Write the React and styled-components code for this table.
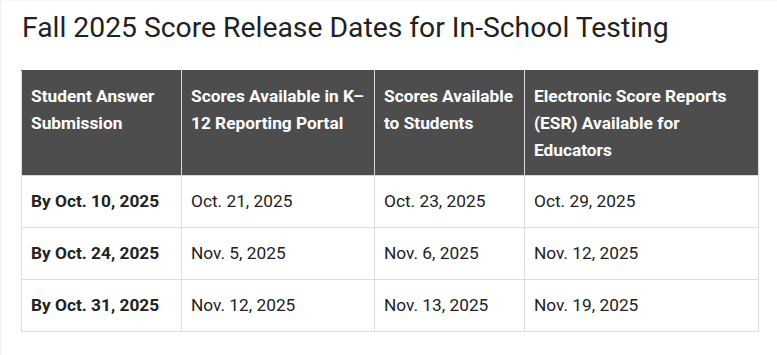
import React from 'react';
import styled, { createGlobalStyle } from 'styled-components';

const GlobalStyle = createGlobalStyle`
    body {
        margin: 0;
        background: #FFFFFF;
        font-family: Roboto, "Liberation Sans", sans-serif;
        color: #222222;
    }
`;

const Page = styled.div`
    min-height: 355px;
    box-sizing: border-box;
    border-left: 1px solid #F0F0F0;
    border-top: 1px solid #F7F7F7;
    padding: 7px 20px 0 20px;
`;

const Title = styled.h2`
    margin: 0 0 22px 1px;
    font-size: 28.3px;
    font-weight: 400;
    line-height: 40px;
    color: #222222;
`;

const Table = styled.table`
    width: 737px;
    border-collapse: collapse;
    table-layout: fixed;
`;

const HeadCell = styled.th`
    background: #4D4D4D;
    color: #FFFFFF;
    font-size: 17.3px;
    font-weight: 700;
    line-height: 27px;
    text-align: left;
    vertical-align: top;
    padding: 12px 9px 11px 9px;
    border: 1px solid #D9D9D9;
    border-top-color: #4D4D4D;
`;

const Cell = styled.td`
    font-size: 17.3px;
    font-weight: ${(props) => (props.$bold ? 700 : 400)};
    line-height: 27px;
    color: #222222;
    padding: 12px 9px;
    border: 1px solid #DDDDDD;
`;

const headers = [
    'Student Answer Submission',
    'Scores Available in K–12 Reporting Portal',
    'Scores Available to Students',
    'Electronic Score Reports (ESR) Available for Educators',
];

const widths = [160, 193, 150, 234];

const rows = [
    ['By Oct. 10, 2025', 'Oct. 21, 2025', 'Oct. 23, 2025', 'Oct. 29, 2025'],
    ['By Oct. 24, 2025', 'Nov. 5, 2025', 'Nov. 6, 2025', 'Nov. 12, 2025'],
    ['By Oct. 31, 2025', 'Nov. 12, 2025', 'Nov. 13, 2025', 'Nov. 19, 2025'],
];

export default function App() {
    return (
        <Page>
            <GlobalStyle />
            <Title>Fall 2025 Score Release Dates for In-School Testing</Title>
            <Table>
                <colgroup>
                    {widths.map((w, i) => (
                        <col key={i} style={{ width: w }} />
                    ))}
                </colgroup>
                <thead>
                    <tr>
                        {headers.map((h) => (
                            <HeadCell key={h}>{h}</HeadCell>
                        ))}
                    </tr>
                </thead>
                <tbody>
                    {rows.map((row) => (
                        <tr key={row[0]}>
                            {row.map((c, i) => (
                                <Cell key={i} $bold={i === 0}>{c}</Cell>
                            ))}
                        </tr>
                    ))}
                </tbody>
            </Table>
        </Page>
    );
}
